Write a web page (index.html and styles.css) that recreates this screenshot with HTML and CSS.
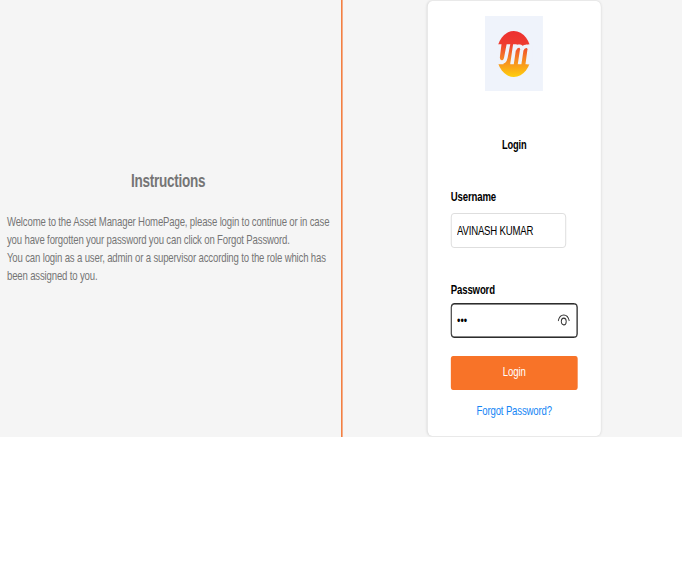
FILE: index.html
```html
<!DOCTYPE html>
<html lang="en">
<head>
<meta charset="utf-8">
<title>Asset Manager - Login</title>
<link rel="stylesheet" href="styles.css">
</head>
<body>
<div class="frame">
<main class="page">
  <section class="instructions">
    <h2>Instructions</h2>
    <p>Welcome to the Asset Manager HomePage, please login to continue or in case<br>you have forgotten your password you can click on Forgot Password.<br>You can login as a user, admin or a supervisor according to the role which has<br>been assigned to you.</p>
  </section>
  <section class="login">
    <form class="card">
      <svg class="logo" viewBox="0 0 58 75" preserveAspectRatio="none" aria-hidden="true">
        <defs>
          <linearGradient id="sun" gradientUnits="userSpaceOnUse" x1="0" y1="15" x2="0" y2="61">
            <stop offset="0" stop-color="#ed3030"/>
            <stop offset=".28" stop-color="#ee3b30"/>
            <stop offset=".6" stop-color="#f58224"/>
            <stop offset="1" stop-color="#ffcf0c"/>
          </linearGradient>
          <clipPath id="band"><rect x="10" y="28.300" width="38" height="19.900"/></clipPath>
        </defs>
        <rect width="58" height="75" fill="#eff3fb"/>
        <ellipse cx="29" cy="38" rx="17.300" ry="23" fill="url(#sun)"/>
        <g class="letters" clip-path="url(#band)">
          <path class="cut" d="M10 27H16.800L15 41C14.800 44 16.500 44.700 18.500 44.700V49H10Z"/>
          <path d="M24 26L21 41.500C20.200 45.500 19 46.300 15 46.300H12"/>
          <path d="M30.200 27L27 49M29.500 34C31 29.300 37.300 28.300 36.900 33.500L34.600 49M36.900 34C38.500 29.300 44.800 28.500 44.300 34L42.300 49"/>
          <path class="cut" d="M43.500 28H48V49H42.500Z"/>
        </g>
      </svg>
      <h3>Login</h3>
      <label for="user">Username</label>
      <input id="user" class="user" type="text" value="AVINASH KUMAR">
      <label for="pass">Password</label>
      <div class="password">
        <input id="pass" type="password" value="abc">
        <svg class="eye" viewBox="0 0 16 12" preserveAspectRatio="none" aria-hidden="true">
          <path d="M.8 7C2 2.700 4.800 1 8 1S14 2.700 15.200 7"/>
          <ellipse cx="8" cy="7.500" rx="3.200" ry="3.300"/>
        </svg>
      </div>
      <button type="button">Login</button>
      <a href="#">Forgot Password?</a>
    </form>
  </section>
</main>
</div>
</body>
</html>
```
FILE: styles.css
```css
* { box-sizing: border-box; }
body {
  margin: 0;
  background: #fff;
  font: 12.400px/18px "Liberation Sans", Arial, sans-serif;
  letter-spacing: -.2px;
}
.frame { width: 100%; height: 437px; overflow: hidden; background: #f5f5f5; }
/* Condensed horizontal proportions for the whole layout */
.page {
  display: flex;
  width: 882px;
  height: 437px;
  transform: scaleX(.77333);
  transform-origin: 0 0;
}
.instructions {
  width: 443px;
  padding: 169px 9px 0;
  background: linear-gradient(#f37b3b, #f37b3b) right / 2px 100% no-repeat;
  color: #757575;
}
.instructions h2 {
  margin: 0 0 20px;
  padding-right: 8px;
  font-size: 17.500px;
  line-height: 24px;
  letter-spacing: -.35px;
  text-align: center;
}
.instructions p { margin: 0; white-space: nowrap; }
.login { flex: 1; padding-left: 110px; }
.card {
  display: flex;
  flex-direction: column;
  width: 224px;
  height: 435px;
  margin-top: 1px;
  padding: 15px 30px 0;
  border-radius: 6px;
  background: #fff;
  box-shadow: 0 0 3px rgba(0, 0, 0, .15);
}
.logo { width: 75px; height: 75px; align-self: center; flex: none; margin-right: 1px; }
.letters { fill: none; stroke: #eff3fb; stroke-width: 3.600; }
.letters .cut { fill: #eff3fb; stroke: none; }
h3 { margin: 45px 0 34px; font-size: 12px; line-height: 18px; text-align: center; }
label { font-weight: bold; }
input {
  height: 35px;
  padding: 0 7px;
  border: 1px solid #dadada;
  border-radius: 4px;
  font: inherit;
  letter-spacing: -.25px;
  background: #fff;
  color: #000;
  outline: 0;
}
.user { width: 149px; margin: 7px 0 33px; }
.password { position: relative; margin-top: 4px; height: 35px; }
.password input {
  display: block;
  width: 100%;
  border-color: #111;
  box-shadow: inset 0 0 0 .5px #111;
  letter-spacing: 0;
}
.eye { position: absolute; right: 10px; top: 11px; width: 16px; height: 12px; fill: none; stroke: #333; stroke-width: 1.200; }
button {
  height: 34px;
  margin: 18px 0 12px;
  padding-bottom: 3px;
  border: 0;
  border-radius: 3px;
  background: #f87328;
  color: #fff;
  font: inherit;
  letter-spacing: -.1px;
}
a { color: #1686f5; text-align: center; text-decoration: none; }
```
